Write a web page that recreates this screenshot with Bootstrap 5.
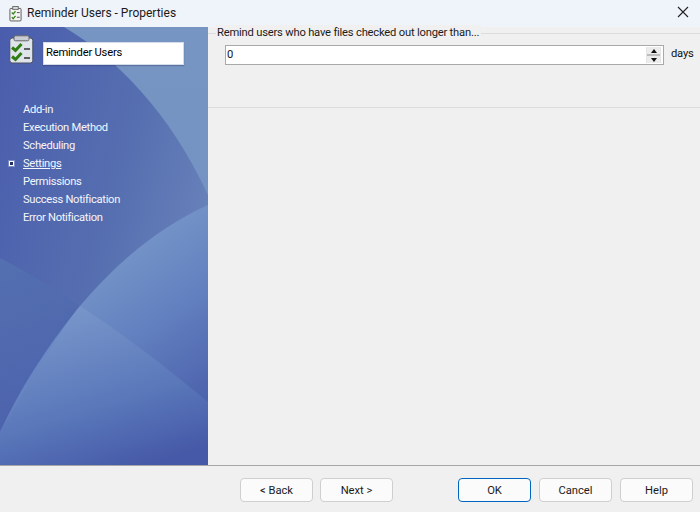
<!DOCTYPE html>
<html lang="en">
<head>
<meta charset="utf-8">
<title>Reminder Users - Properties</title>
<link href="https://cdn.jsdelivr.net/npm/bootstrap@5.3.0/dist/css/bootstrap.min.css" rel="stylesheet">
<style>
html,body{height:100%;margin:0;overflow:hidden}
body{font-family:Roboto,"Liberation Sans",Arial,sans-serif;font-size:11.2px;letter-spacing:-.2px;line-height:18px;background:#f0f0f0;color:#111;width:700px;height:512px}
.dlg-title{height:27px;background:#eff3fa;padding-left:9px;gap:5px;font-size:12px;letter-spacing:0;color:#1a1a1a}
.dlg-title>span{margin-top:-2px}
.dlg-close{width:14px;height:14px;margin-right:10px;margin-left:auto;margin-top:-3px}
.dlg-main{height:438px}
.dlg-side{width:208px;flex:none;position:relative;overflow:hidden;background:#4b60ad}
.side-art{position:absolute;left:0;top:0;width:208px;height:438px}
.side-layer{position:relative}
.side-head{padding:8px 0 0 9px;gap:9px;height:68px}
.name-box{width:141px;height:23px;margin-top:7px;background:#fff;border:1px solid #d5dbe8;padding-left:2px;line-height:20px;color:#000;box-shadow:0 1px 1px rgba(30,40,90,.3)}
.side-nav{margin:0;padding:6px 0 0 23px;list-style:none;color:#f4f6fc;line-height:18px;letter-spacing:-.3px}
.side-nav li{position:relative;height:18px}
.side-nav .on{text-decoration:underline}
.side-nav .on::before{content:"";position:absolute;left:-14px;top:6px;width:5px;height:5px;background:#26305c;border:1px solid #fff;box-shadow:0 0 0 1px rgba(142,156,208,.7)}
.dlg-pane{flex:1;min-width:0}
.pane-top{height:81px;border-bottom:1px solid #dcdcdc;position:relative}
.group-rule{position:absolute;left:0;right:0;top:6px;border-top:1px solid #dcdcdc}
.group-label{position:absolute;left:8px;top:-2px;background:#f0f0f0;padding:0 2px 0 1px;line-height:16px;white-space:nowrap;color:#1c1c1c}
.num-row{position:absolute;left:17px;top:18px;width:478px;gap:7px}
.num-field{width:439px;height:20px;flex:none;background:#fff;border:1px solid #a9a9a9;padding:0 2px 0 1px;line-height:17px}
.num-spin{margin-left:auto;margin-top:1px;width:15px;height:16px;background:#bdbdbd;border:1px solid #e4e4e4;border-width:0 1px}
.num-spin span{height:7px;background:#ececec;margin-bottom:2px;justify-content:center;align-items:center}
.num-spin span+span{margin-bottom:0}
.num-spin i{display:block;width:0;height:0;border-left:3.500px solid transparent;border-right:3.500px solid transparent}
.num-spin .up{border-bottom:4px solid #111}
.num-spin .down{border-top:4px solid #111}
.days-lbl{flex:none;line-height:18px;white-space:nowrap}
.dlg-foot{height:47px;border-top:1px solid #a6a6a6;background:#f0f0f0;padding:12px 7px 0 240px}
.dlg-btn{width:73px;height:24px;padding:1px 0 0;border:1px solid #cfcfcf;border-radius:4px;background:#fbfbfb;color:#1a1a1a;font-size:11.2px;line-height:20px}
.dlg-btn:hover{background:#fbfbfb;border-color:#cfcfcf;color:#1a1a1a}
.dlg-btn.is-default{border:1.5px solid #0067c0}
.gap-a{margin-left:7px}.gap-b{margin-left:65px}
</style>
</head>
<body>
<div class="dlg-title d-flex align-items-center">
  <svg width="13" height="16" viewBox="0 0 14 17"><rect x="1" y="2.500" width="12" height="13.500" rx="1" fill="#f4f4f4" stroke="#555"/><rect x="4" y=".5" width="6" height="3" fill="#ddd" stroke="#666"/><path d="M3 7l1.500 1.500L7 5.500M3 12l1.500 1.500L7 10.500" fill="none" stroke="#3a8a1c" stroke-width="1.500"/><path d="M8.500 7h3M8.500 12h3" stroke="#444"/></svg>
  <span>Reminder Users - Properties</span>
  <svg class="dlg-close" viewBox="0 0 14 14"><path d="M2 2l10 10M12 2L2 12" stroke="#222" stroke-width="1.100" fill="none"/></svg>
</div>
<div class="dlg-main d-flex">
  <aside class="dlg-side">
    <svg class="side-art" viewBox="0 0 208 438" preserveAspectRatio="none" aria-hidden="true">
      <defs>
        <linearGradient id="base" x1="0" y1="0" x2="1" y2=".55"><stop offset="0" stop-color="#4a5dad"/><stop offset=".6" stop-color="#566fb0"/><stop offset="1" stop-color="#6a84bc"/></linearGradient>
        <linearGradient id="tr" x1="0" y1="0" x2="0" y2="1"><stop offset="0" stop-color="#7795c2"/><stop offset="1" stop-color="#7593c2"/></linearGradient>
        <linearGradient id="low" x1=".2" y1="0" x2=".75" y2="1"><stop offset="0" stop-color="#87a8d0"/><stop offset=".55" stop-color="#6482c0"/><stop offset="1" stop-color="#465aa8"/></linearGradient>
        <linearGradient id="left" x1="0" y1="0" x2=".3" y2="1"><stop offset="0" stop-color="#5470b0"/><stop offset="1" stop-color="#4a5fac"/></linearGradient>
        <linearGradient id="cross" x1=".3" y1="0" x2=".7" y2="1"><stop offset="0" stop-color="#7a97cb"/><stop offset=".6" stop-color="#5a78ba"/><stop offset="1" stop-color="#4659a8"/></linearGradient>
      </defs>
      <rect width="208" height="438" fill="url(#base)"/>
      <path d="M64 0C115 30 170 85 208 168V0Z" fill="url(#tr)"/>
      <path d="M0 231C60 262 140 318 208 375V438H0Z" fill="url(#left)"/>
      <path d="M208 178C160 200 120 232 80 279C45 322 20 362 0 405V438H208Z" fill="url(#low)"/>
      <path d="M80 279C60 303 30 355 0 405V438H208V375C160 335 120 305 80 279Z" fill="url(#cross)"/>
    </svg>
    <div class="side-layer">
      <div class="side-head d-flex">
        <svg width="25" height="29" viewBox="0 0 25 29"><rect x=".8" y="3" width="23" height="25" rx="2.500" fill="#dfe3ea" stroke="#4a4f63"/><rect x="5" y=".8" width="15" height="5" rx="1.500" fill="#c9ccd4" stroke="#666"/><path d="M3 12.500l3.500 3L12.500 9M3 21.500l3.500 3L12.500 18" fill="none" stroke="#2f7d12" stroke-width="3"/><path d="M15 14h6M15 23h6" stroke="#333" stroke-width="1.300"/></svg>
        <div class="name-box">Reminder Users</div>
      </div>
      <ul class="side-nav">
        <li>Add-in</li>
        <li>Execution Method</li>
        <li>Scheduling</li>
        <li class="on">Settings</li>
        <li>Permissions</li>
        <li>Success Notification</li>
        <li>Error Notification</li>
      </ul>
    </div>
  </aside>
  <section class="dlg-pane">
    <div class="pane-top">
      <div class="group-rule"></div>
      <div class="group-label">Remind users who have files checked out longer than...</div>
      <div class="num-row d-flex">
        <div class="num-field d-flex"><span>0</span>
          <div class="num-spin d-flex flex-column"><span class="d-flex"><i class="up"></i></span><span class="d-flex"><i class="down"></i></span></div>
        </div>
        <div class="days-lbl">days</div>
      </div>
    </div>
  </section>
</div>
<footer class="dlg-foot d-flex align-items-start">
  <button type="button" class="btn dlg-btn">&lt; Back</button>
  <button type="button" class="btn dlg-btn gap-a">Next &gt;</button>
  <button type="button" class="btn dlg-btn is-default gap-b">OK</button>
  <button type="button" class="btn dlg-btn ms-2">Cancel</button>
  <button type="button" class="btn dlg-btn ms-2">Help</button>
</footer>
<script src="https://cdn.jsdelivr.net/npm/bootstrap@5.3.0/dist/js/bootstrap.bundle.min.js"></script>
</body>
</html>
